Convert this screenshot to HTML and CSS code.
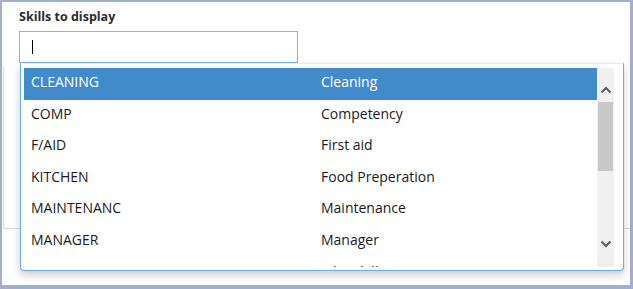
FILE: index.html
```html
<!DOCTYPE html>
<html>
<head>
<meta charset="utf-8">
<link rel="stylesheet" href="styles.css">
</head>
<body>
<div class="panel">
  <div class="field">
    <div class="label">Skills to display</div>
    <div class="input"><span class="caret"></span></div>
  </div>
  <div class="under"></div>
  <div class="dropdown">
    <div class="list">
      <div class="rows">
        <div class="row active"><span>CLEANING</span><span>Cleaning</span></div>
        <div class="row"><span>COMP</span><span>Competency</span></div>
        <div class="row"><span>F/AID</span><span>First aid</span></div>
        <div class="row"><span>KITCHEN</span><span>Food Preperation</span></div>
        <div class="row"><span>MAINTENANC</span><span>Maintenance</span></div>
        <div class="row"><span>MANAGER</span><span>Manager</span></div>
        <div class="row"><span>FLYING</span><span>Pilot skill</span></div>
      </div>
      <div class="scrollbar">
        <div class="sb-btn">
          <svg width="12" height="8" viewBox="0 0 12 8"><path d="M1.5 6.5 L6 2 L10.5 6.5" fill="none" stroke="#5a5a5a" stroke-width="2"/></svg>
        </div>
        <div class="sb-track"><div class="sb-thumb"></div></div>
        <div class="sb-btn down">
          <svg width="12" height="8" viewBox="0 0 12 8"><path d="M1.5 1.5 L6 6 L10.5 1.5" fill="none" stroke="#5a5a5a" stroke-width="2"/></svg>
        </div>
      </div>
    </div>
  </div>
</div>
</body>
</html>
```

FILE: styles.css
```css
html, body {
  margin: 0;
  padding: 0;
}
body {
  background: #a2aed0;
  width: 633px;
  height: 289px;
  overflow: hidden;
  font-family: "Open Sans", "Noto Sans", sans-serif;
  color: #1e1e1e;
}
.panel {
  position: relative;
  margin: 2px 3px 0 2px;
  height: 283px;
  background: #ffffff;
}
.field {
  padding: 5px 0 0 17px;
}
.label {
  font-size: 12.5px;
  font-weight: 700;
  line-height: 19px;
  color: #2b2b2b;
}
.input {
  margin-top: 5px;
  height: 30px;
  border: 1px solid #7db8e8;
  display: flex;
  align-items: center;
  padding-left: 12px;
  box-sizing: content-box;
  width: 265px;
}
.caret {
  display: block;
  width: 1px;
  height: 14px;
  background: #000;
}
.under {
  margin: 3px 0 0 1px;
  height: 162px;
  border-left: 1px solid #dcdcdc;
  border-bottom: 1px solid #dcdcdc;
}
.dropdown {
  position: absolute;
  left: 18px;
  top: 61px;
  width: 596px;
  height: 199px;
  padding: 4px 3px 3px 3px;
  border: 1px solid #66afe9;
  border-top-color: #e4ecf4;
  border-radius: 0 0 4px 4px;
  background: #fff;
  box-shadow: 0 4px 8px rgba(0, 0, 0, 0.2);
}
.list {
  display: flex;
  height: 199px;
}
.rows {
  width: 573px;
  height: 199px;
  overflow: hidden;
}
.row {
  display: grid;
  grid-template-columns: 290px 1fr;
  height: 31.6px;
  box-sizing: border-box;
  padding: 4px 7px 0 7px;
  font-size: 14px;
  line-height: 19px;
  color: #1a1a1a;
}
.row.active {
  height: 32px;
  margin-bottom: -0.4px;
  background: #428bca;
  color: #ffffff;
}
.scrollbar {
  width: 17px;
  background: #f0f0f0;
  display: flex;
  flex-direction: column;
}
.sb-btn {
  height: 33px;
  display: flex;
  justify-content: center;
  align-items: flex-end;
  padding-bottom: 7px;
  box-sizing: border-box;
}
.sb-btn svg {
  display: block;
}
.sb-btn.down {
  align-items: flex-start;
  padding-top: 6px;
  padding-bottom: 0;
}
.sb-track {
  flex: 1;
  padding: 1px 1px 0 1px;
}
.sb-thumb {
  height: 69px;
  background: #c8c8c8;
}
```
